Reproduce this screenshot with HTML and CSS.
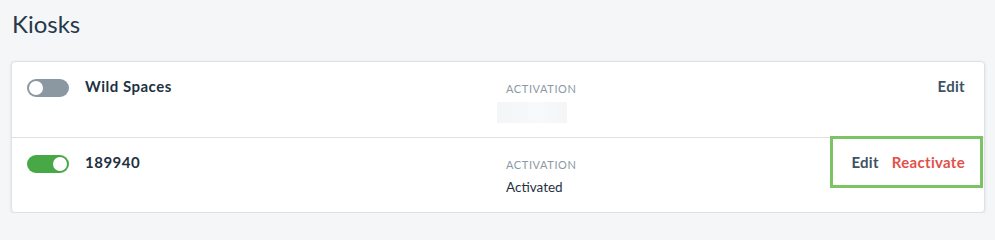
FILE: index.html
```html
<!DOCTYPE html>
<html>
<head>
<meta charset="utf-8">
<link rel="stylesheet" href="styles.css">
</head>
<body>
<div class="page">
  <h1 class="title">Kiosks</h1>
  <div class="card">
    <div class="row">
      <div class="main">
        <span class="toggle toggle-off"><span class="knob"></span></span>
        <span class="name">Wild Spaces</span>
      </div>
      <div class="activation">
        <div class="label">ACTIVATION</div>
        <div class="skeleton"></div>
      </div>
      <div class="actions">
        <span class="link">Edit</span>
      </div>
    </div>
    <div class="row">
      <div class="main">
        <span class="toggle toggle-on"><span class="knob"></span></span>
        <span class="name">189940</span>
      </div>
      <div class="activation">
        <div class="label">ACTIVATION</div>
        <div class="value">Activated</div>
      </div>
      <div class="actions highlighted">
        <span class="link">Edit</span>
        <span class="link danger">Reactivate</span>
      </div>
    </div>
  </div>
</div>
</body>
</html>
```

FILE: styles.css
```css
html, body {
  margin: 0;
  padding: 0;
  background: #f5f6f8;
}
body {
  font-family: "Lato", "Open Sans", sans-serif;
  color: #1f3142;
}
.page {
  padding: 10px 10px 0 11px;
}
.title {
  margin: 0 0 0 1px;
  font-size: 24px;
  font-weight: 400;
  line-height: 28px;
  color: #25394a;
  height: 51px;
}
.card {
  width: 972px;
  background: #fff;
  border: 1px solid #dde1e5;
  border-radius: 4px;
  box-shadow: 0 1px 3px rgba(40, 55, 70, 0.12);
}
.row {
  display: flex;
  align-items: flex-start;
  height: 75px;
  padding: 15px 19px 0 15px;
  box-sizing: border-box;
}
.row + .row {
  border-top: 1px solid #dde1e5;
  padding-top: 15px;
}
.main {
  display: flex;
  align-items: flex-start;
  gap: 16px;
  width: 479px;
}
.toggle {
  display: block;
  position: relative;
  width: 42px;
  height: 18px;
  border-radius: 9px;
  margin-top: 2px;
}
.toggle-off { background: #8b98a2; }
.toggle-on { background: #48a846; }
.knob {
  position: absolute;
  top: 2px;
  width: 14px;
  height: 14px;
  border-radius: 50%;
  background: #fff;
}
.toggle-off .knob { left: 2px; }
.toggle-on .knob { right: 2px; }
.name {
  font-size: 15px;
  font-weight: 700;
  line-height: 18px;
  letter-spacing: 0.5px;
  color: #1e3142;
}
.activation {
  padding-top: 5px;
}
.label {
  font-size: 11px;
  line-height: 13px;
  color: #8c99a4;
  letter-spacing: 0.6px;
}
.skeleton {
  width: 70px;
  height: 21px;
  margin: 7px 0 0 -9px;
  background: linear-gradient(90deg, #f4f5f6, #f8f9fa 60%, #f4f5f6);
}
.value {
  margin-top: 8px;
  font-size: 13.5px;
  line-height: 16px;
  color: #1f3142;
}
.actions {
  margin-left: auto;
  display: flex;
  gap: 13px;
  position: relative;
}
.link {
  font-size: 15px;
  font-weight: 700;
  line-height: 18px;
  letter-spacing: 0.3px;
  color: #3d5263;
}
.danger {
  color: #e2514a;
}
.highlighted::after {
  content: "";
  position: absolute;
  top: -17px;
  bottom: -17px;
  left: -21px;
  right: -18px;
  border: 3px solid #7cc364;
  pointer-events: none;
}
```
